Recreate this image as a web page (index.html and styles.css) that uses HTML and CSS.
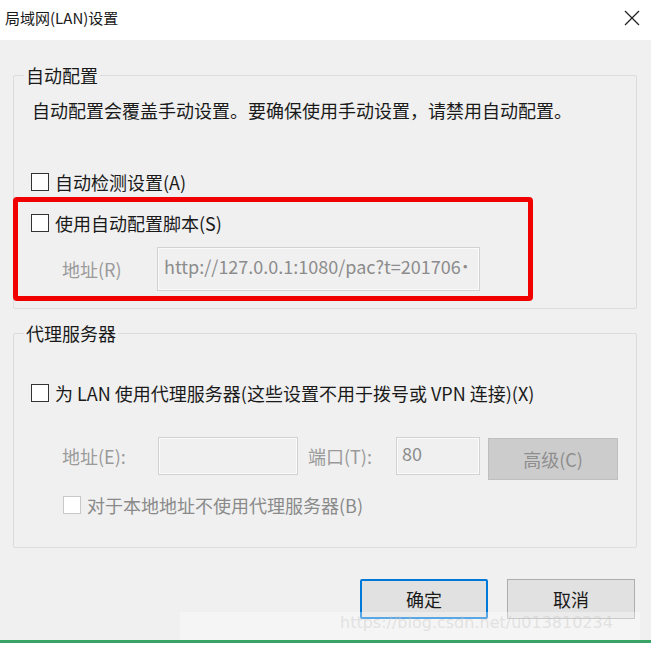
FILE: index.html
```html
<!DOCTYPE html>
<html>
	<head>
		<meta charset="UTF-8">
		<title>局域网(LAN)设置</title>
		<link rel="stylesheet" href="styles.css">
	</head>

	<body>
		<div class="dialog">
			<div class="d_title">
				<span>局域网(LAN)设置</span>
				<svg class="d_close" width="16" height="16" viewBox="0 0 16 16">
					<path d="M1 1 L15 15 M15 1 L1 15" stroke="#222" stroke-width="1.3" fill="none"/>
				</svg>
			</div>

			<div class="d_body">
				<!-- 自动配置 -->
				<div class="group g_auto">
					<span class="g_label">自动配置</span>
					<p class="desc">自动配置会覆盖手动设置。要确保使用手动设置，请禁用自动配置。</p>
					<div class="chk_row r_detect"><span class="chk"></span>自动检测设置(A)</div>
					<div class="mark">
						<div class="chk_row r_script"><span class="chk"></span>使用自动配置脚本(S)</div>
						<div class="addr_row">
							<span class="lbl">地址(R)</span>
							<div class="ipt ipt_url">http://127.0.0.1:1080/pac?t=201706&#x02D9;</div>
						</div>
					</div>
				</div>

				<!-- 代理服务器 -->
				<div class="group g_proxy">
					<span class="g_label">代理服务器</span>
					<div class="chk_row r_lan"><span class="chk"></span>为 LAN 使用代理服务器(这些设置不用于拨号或 VPN 连接)(X)</div>
					<div class="proxy_row">
						<span class="lbl lbl_e">地址(E):</span>
						<div class="ipt ipt_addr"></div>
						<span class="lbl lbl_t">端口(T):</span>
						<div class="ipt ipt_port">80</div>
						<button class="btn_adv" disabled>高级(C)</button>
					</div>
					<div class="chk_row r_local off"><span class="chk"></span>对于本地地址不使用代理服务器(B)</div>
				</div>

				<div class="d_btns">
					<button class="btn btn_ok">确定</button>
					<button class="btn">取消</button>
				</div>
			</div>

			<div class="wm">https://blog.csdn.net/u013810234</div>
			<div class="d_foot"></div>
		</div>
	</body>
</html>
```

FILE: styles.css
```css
* {
	margin: 0;
	padding: 0;
	box-sizing: border-box;
}

html, body {
	background: #fff;
}

body {
	width: 651px;
	height: 649px;
	overflow: hidden;
	font-family: "Noto Sans CJK SC", "Microsoft YaHei", sans-serif;
	font-size: 18px;
	line-height: 20px;
	color: #1a1a1a;
}

.dialog {
	position: relative;
	width: 651px;
	height: 649px;
}

.d_title {
	height: 40px;
	display: flex;
	align-items: center;
	justify-content: space-between;
	padding: 0 11px 4px 5px;
	background: #fff;
	font-size: 15px;
}

.d_body {
	height: 600px;
	background: #f0f0f0;
	padding: 35px 14px 0 13px;
}

/* 分组框 */
.group {
	position: relative;
	border: 1px solid #dcdcdc;
	border-radius: 2px;
}

.g_label {
	position: absolute;
	top: -11px;
	left: 10px;
	padding: 0 2px;
	background: #f0f0f0;
}

.g_auto {
	height: 234px;
}

.g_proxy {
	height: 215px;
	margin-top: 24px;
}

.desc {
	margin: 24px 0 0 18px;
	white-space: nowrap;
}

.chk_row {
	display: flex;
	align-items: center;
	height: 20px;
	white-space: nowrap;
}

.chk {
	width: 18px;
	height: 18px;
	margin-right: 6px;
	border: 1.5px solid #333;
	background: #fff;
}

.r_detect {
	margin: 52px 0 0 17px;
}

/* 红色标注框 */
.mark {
	width: 520px;
	height: 104px;
	margin: 5px 0 0 -1px;
	border: 5px solid #f10000;
	border-radius: 4px;
}

.r_script {
	margin: 11px 0 0 13px;
}

.addr_row {
	display: flex;
	align-items: center;
	margin: 14px 0 0 44px;
}

.lbl {
	color: #9a9a9a;
}

.addr_row .lbl {
	width: 95px;
}

.ipt {
	border: 1px solid #d2d2d2;
	box-shadow: inset 0 0 0 1px #fafafa;
	background: #f0f0f0;
	color: #8c8c8c;
}

.ipt_url {
	width: 323px;
	height: 44px;
	padding: 8px 0 0 6px;
	white-space: nowrap;
	overflow: hidden;
}

.r_lan {
	margin: 49px 0 0 17px;
}

.proxy_row {
	display: flex;
	align-items: flex-start;
	margin: 34px 0 0 48px;
}

.proxy_row .lbl {
	line-height: 38px;
	white-space: nowrap;
}

.lbl_e {
	width: 96px;
}

.lbl_t {
	width: 88px;
	margin-left: 10px;
}

.ipt_addr {
	width: 140px;
	height: 38px;
}

.ipt_port {
	width: 84px;
	height: 38px;
	padding: 5px 0 0 5px;
}

.btn_adv {
	width: 130px;
	height: 42px;
	margin: 1px 0 0 8px;
	border: 1px solid #bfbfbf;
	background: #cccccc;
	color: #8e8e8e;
	font: inherit;
}

.r_local {
	margin: 15px 0 0 49px;
	color: #8a8a8a;
}

.r_local .chk {
	border: 1px solid #c8c8c8;
}

.d_btns {
	display: flex;
	justify-content: flex-end;
	gap: 19px;
	margin: 31px 2px 0 0;
}

.btn {
	width: 128px;
	height: 40px;
	border: 1px solid #adadad;
	background: #e1e1e1;
	color: #1a1a1a;
	font: inherit;
}

.btn_ok {
	border: 2px solid #0078d7;
	border-radius: 2px;
}

/* 水印 */
.wm {
	position: absolute;
	left: 180px;
	top: 612px;
	width: 460px;
	height: 28px;
	padding-left: 160px;
	background: rgba(255, 255, 255, 0.35);
	color: rgba(200, 200, 200, 0.45);
	font-family: "DejaVu Sans", sans-serif;
	font-size: 16px;
	line-height: 22px;
	white-space: nowrap;
	overflow: hidden;
}

.d_foot {
	position: absolute;
	left: 0;
	right: 0;
	top: 640px;
	height: 3px;
	background: #3aa366;
}
```
